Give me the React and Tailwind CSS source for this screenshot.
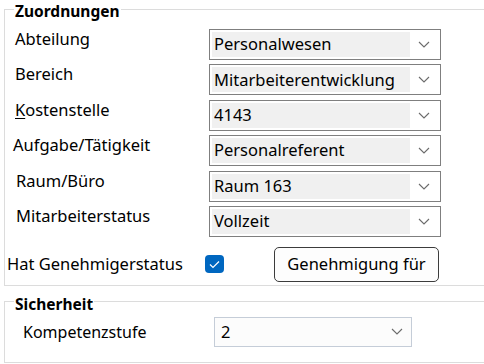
import React from 'react';

const font = { fontFamily: '"Noto Sans", "Open Sans", sans-serif' };

const Chevron = ({ className = '' }) => (
    <svg width="12" height="7" viewBox="0 0 12 7" className={className}>
        <path d="M1 1 L6 6 L11 1" fill="none" stroke="#6b6b6b" strokeWidth="1.1" />
    </svg>
);

// classic combobox, gray text field inside a dark frame
const Combo = ({ value }) => (
    <div className="flex h-[31px] w-[232px] items-stretch border border-[#7f7f7f] bg-white p-[2px]">
        <div className="flex flex-1 items-center bg-[#f0f0f0] pl-[2px] text-[16.5px] leading-none text-black">
            {value}
        </div>
        <div className="flex w-[28px] items-center justify-center">
            <Chevron />
        </div>
    </div>
);

const rows = [
    { label: 'Abteilung', value: 'Personalwesen', pad: 'pl-[10px]' },
    { label: 'Bereich', value: 'Mitarbeiterentwicklung', pad: 'pl-[10px]' },
    { label: 'Kostenstelle', value: '4143', pad: 'pl-[10px]', accel: true },
    { label: 'Aufgabe/Tätigkeit', value: 'Personalreferent', pad: 'pl-[8px]' },
    { label: 'Raum/Büro', value: 'Raum 163', pad: 'pl-[11px]' },
    { label: 'Mitarbeiterstatus', value: 'Vollzeit', pad: 'pl-[11px]' },
];

const Legend = ({ children }) => (
    <legend className="ml-[9px] px-[1px] text-[15.5px] font-bold leading-[16px] text-black">
        <span className="relative top-[2px]">{children}</span>
    </legend>
);

export default function App() {
    return (
        <div className="h-[364px] w-[484px] overflow-hidden bg-white pt-[1px] text-black" style={font}>
            {/* Zuordnungen */}
            <fieldset className="ml-[4px] w-[500px] border border-[#dcdcdc] pb-[3px]">
                <Legend>Zuordnungen</Legend>
                <div className="mt-[12px] flex flex-col gap-[4.4px]">
                    {rows.map((r) => (
                        <div key={r.label} className="flex items-start">
                            <div className={`-mt-[1px] w-[204px] text-[16.5px] leading-[22px] ${r.pad}`}>
                                {r.accel ? (
                                    <>
                                        <span className="underline underline-offset-2">K</span>
                                        {r.label.slice(1)}
                                    </>
                                ) : (
                                    r.label
                                )}
                            </div>
                            <Combo value={r.value} />
                        </div>
                    ))}
                </div>
                <div className="mt-[10px] flex items-center">
                    <div className="w-[200px] pl-[2px] text-[16.5px] leading-[22px]">Hat Genehmigerstatus</div>
                    <div className="flex h-[18px] w-[19px] items-center justify-center rounded-[4px] bg-[#0067c0]">
                        <svg width="11" height="9" viewBox="0 0 11 9">
                            <path d="M1 4.5 L4 7.5 L10 1.5" fill="none" stroke="white" strokeWidth="1.2" />
                        </svg>
                    </div>
                    <button className="ml-[50px] h-[35px] w-[165px] rounded-[5px] border border-[#3c3c3c] bg-[#fdfdfd] text-[16.5px] leading-none text-black">
                        Genehmigung für
                    </button>
                </div>
            </fieldset>

            {/* Sicherheit */}
            <fieldset className="ml-[4px] mt-[8px] w-[500px] border border-[#dcdcdc] pb-[15px]">
                <Legend>Sicherheit</Legend>
                <div className="mt-[7px] flex items-center">
                    <div className="w-[209px] pl-[18px] text-[16px] leading-[22px]">Kompetenzstufe</div>
                    <div className="flex h-[30px] w-[198px] items-center border border-[#c5cdd8] bg-[#fcfcfc] pl-[6px] pr-[8px] text-[16.5px]">
                        <span className="flex-1">2</span>
                        <Chevron />
                    </div>
                </div>
            </fieldset>
        </div>
    );
}
